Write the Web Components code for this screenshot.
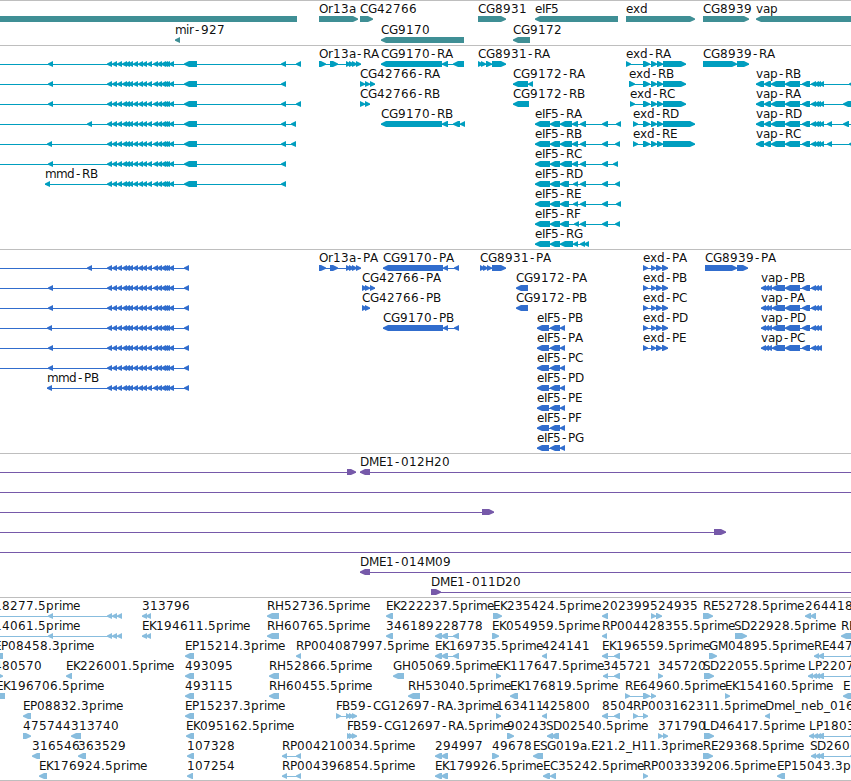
<!DOCTYPE html>
<html lang="en">
<head>
<meta charset="utf-8">
<title>Genome browser</title>
<style>
  body {
    margin: 0;
    background: #fff;
    overflow: hidden;
  }
</style>
</head>
<body>
<genome-view></genome-view>

<script>
const VIEW_WIDTH = 851;

// whole-pixel character advances of the track labels, digits are 8
const ADVANCE = {
  A: 8, B: 8, C: 8, D: 9, E: 7, F: 6, G: 9, H: 9, I: 3, K: 7, L: 7, M: 10, O: 9, P: 7, R: 8, S: 7,
  a: 7, b: 8, d: 8, e: 7, i: 3, l: 3, m: 11, n: 8, p: 8, r: 5, v: 7, x: 7,
  "-": 7, ".": 4, "_": 6
};

// exon groups shared by several transcripts
const MMD = "107-112 112-117 117-122 122-127 125-130 128-133 133-138 138-143 142-147 147-152 153-158 157-162 161-166 163-168 165-170 169-174";
const EXD = "643-650 651-657 657-663";
const EXD_P = "643-648 651-656 656-662 662-668";
const EIF = "535-550 550-560";
const EIF_P = "537-549 550-560 560-565";
const VAP = "756-764 764-771 771-785 785-800 802-810 811-816 814-819 816-821 819-824";
const VAP_P = "761-766 764-769 767-772 772-785 785-800 802-810 811-816 814-819 817-822";
const OFF = "-20--10";
const END = "860-870";

// one feature: "label|direction|start-end start-end ...|label x (optional)"
const TRACKS = [
  {
    color: "#3f8f95", pitch: 21, bottom: 0,
    rows: [
      ["|<|-20-297", "Or13a|>|319-358", "CG42766|>|360-373", "CG8931|>|478-506", "eIF5|<|535-618",
        "exd|>|626-695", "CG8939|>|703-749", "vap|<|756-870"],
      ["mir-927|<|175-180", "CG9170|<|381-464", "CG9172|<|513-530"]
    ]
  },
  {
    color: "#009ebf", pitch: 20, bottom: 1,
    rows: [
      [`|<|${OFF} 48-53 ${MMD} 184-197 281-286 296-301`, "Or13a-RA|>|319-326 330-338 346-351 349-354 352-357 356-361",
        "CG9170-RA|<|381-442 442-448 453-464", "CG8931-RA|>|478-483 481-486 486-492 492-506",
        `exd-RA|>|626-631 ${EXD} 663-686`, "CG8939-RA|>|703-737 737-749"],
      [`|<|${OFF} 48-53 ${MMD} 184-197 281-286`, "CG42766-RA|>|360-365 365-370 370-375",
        "CG9172-RA|<|513-528 528-533", `exd-RB|>|629-635 ${EXD} 663-686`, `vap-RB|<|${VAP} 849-870`],
      [`|<|${OFF} 48-53 ${MMD} 184-197 281-286 296-301`, "CG42766-RB|>|360-365 365-370",
        "CG9172-RB|<|513-529", `exd-RC|>|630-635 ${EXD} 663-686`, `vap-RA|<|${VAP} 843-870`],
      [`|<|${OFF} 87-92 ${MMD} 184-197 281-286 291-296`, "CG9170-RB|<|381-442 442-448 453-460 460-465",
        `eIF5-RA|<|${EIF} 560-572 572-578 580-586 602-608 616-621`, `exd-RD|>|633-638 ${EXD} 663-695`,
        `vap-RD|<|${VAP} 827-832 843-849 ${END}`],
      [`|<|${OFF} 47-52 ${MMD} 184-197 281-286 291-296`,
        `eIF5-RB|<|${EIF} 560-572 572-578 580-586 602-608 615-620`, `exd-RE|>|633-638 ${EXD} 663-695`,
        `vap-RC|<|${VAP} 827-832 849-870`],
      [`|<|${OFF} 48-53 ${MMD} 184-197 281-286`, `eIF5-RC|<|${EIF} 560-572 572-578 580-586 602-608 613-618`],
      [`mmd-RB|<|45-50 ${MMD} 184-197 281-286`, `eIF5-RD|<|${EIF} 560-569 573-578 580-586 602-608 615-620`],
      [`eIF5-RE|<|${EIF} 560-569 573-578 580-586 602-608 616-621`],
      [`eIF5-RF|<|${EIF} 560-569 574-579 580-586 602-608 615-620`],
      [`eIF5-RG|<|${EIF} 560-573 573-578 580-585 584-589`]
    ]
  },
  {
    color: "#316dcd", pitch: 20, bottom: 1,
    rows: [
      [`|<|${OFF} 87-92 ${MMD} 184-189`, "Or13a-PA|>|319-326 330-338 346-351 349-354 352-357 356-361",
        "CG9170-PA|<|383-443 443-448 454-459", "CG8931-PA|>|480-485 483-488 487-492 492-506",
        `exd-PA|>|${EXD_P}`, "CG8939-PA|>|705-737 737-748"],
      [`|<|${OFF} 48-53 ${MMD} 184-189`, "CG42766-PA|>|362-367 365-370 370-375", "CG9172-PA|<|516-528",
        `exd-PB|>|${EXD_P}`, `vap-PB|<|${VAP_P}`],
      [`|<|${OFF} 48-53 ${MMD} 184-189`, "CG42766-PB|>|362-367 365-370", "CG9172-PB|<|516-528",
        `exd-PC|>|${EXD_P}`, `vap-PA|<|${VAP_P}`],
      [`|<|${OFF} 47-52 ${MMD} 184-189`, "CG9170-PB|<|383-443 443-448 454-459", `eIF5-PB|<|${EIF_P}`,
        `exd-PD|>|${EXD_P}`, `vap-PD|<|${VAP_P}`],
      [`|<|${OFF} 48-53 ${MMD} 184-189`, `eIF5-PA|<|${EIF_P}`, `exd-PE|>|${EXD_P}`, `vap-PC|<|${VAP_P}`],
      [`|<|${OFF} 48-53 ${MMD} 184-189`, `eIF5-PC|<|${EIF_P}`],
      [`mmd-PB|<|47-52 ${MMD} 184-189`, `eIF5-PD|<|${EIF_P}`],
      [`eIF5-PE|<|${EIF_P}`],
      [`eIF5-PF|<|${EIF_P}`],
      [`eIF5-PG|<|${EIF_P}`]
    ]
  },
  {
    color: "#7659a9", pitch: 20, bottom: 1,
    rows: [
      [`|>|${OFF} 347-356`, `DME1-012H20|<|360-370 ${END}`],
      [`|>|${OFF} ${END}`],
      [`|>|${OFF} 482-494`],
      [`|>|${OFF} 714-726`],
      [`|>|${OFF} ${END}`],
      [`DME1-014M09|<|360-370 ${END}`],
      [`DME1-011D20|>|431-441 ${END}`]
    ]
  },
  {
    color: "#88bdde", pitch: 20, bottom: 0, last: true,
    rows: [
      [`18277.5prime|<|${OFF} 48-53 107-112 112-117 117-122|-6`, "313796|<|142-147 146-151", "RH52736.5prime|<|267-279",
        "EK222237.5prime|<|386-393", "EK235424.5prime|>|493-502", "202399|<|602-608", "524935|>|651-656 656-662|650",
        "RE52728.5prime|>|703-713", "264418|<|805-811 810-816"],
      [`14061.5prime|<|${OFF} 48-53 107-112 112-117 117-122|-6`, "EK194611.5prime|<|142-147 146-151",
        "RH60765.5prime|<|267-279", "346189|<|386-393", "228778|<|435-442 441-448 453-459",
        "EK054959.5prime|>|492-499", "RP004428355.5prime|<|602-607", "SD22928.5prime|>|735-747|734", "RE|<|841-860"],
      ["EP08458.3prime|<|-10-3|-6", "EP15214.3prime|<|185-194", "RP004087997.5prime|<|296-301",
        "EK169735.5prime|<|435-442 441-448 453-459", "424141|<|542-547", "EK196559.5prime|<|602-608 614-620",
        "GM04895.5prime|>|709-717", "RE447|<|814-819 818-824 850-870"],
      ["480570|>|-10-3|-6", "EK226001.5prime|<|66-72", "493095|<|185-194", "RH52866.5prime|<|269-279",
        "GH05069.5prime|<|393-404", "EK117647.5prime|>|496-501", "345721|<|603-608 614-620", "345720|>|658-663",
        "SD22055.5prime|>|704-714|703", "LP2207|<|808-813 812-817 815-820 818-824 850-870"],
      ["EK196706.5prime|<|-10-5|-4", "493115|<|185-194", "RH60455.5prime|<|269-279", "RH53040.5prime|<|408-420",
        "EK176819.5prime|<|510-518", "RE64960.5prime|>|625-630 643-650 651-656", "EK154160.5prime|>|725-730",
        "E|<|843-860"],
      ["EP08832.3prime|<|23-31", "EP15237.3prime|<|185-194", "FB59-CG12697-RA.3prime|>|336-341 346-351 349-354 352-357",
        "163411|>|496-501", "425800|<|542-547", "8504|<|602-608 614-620", "RP003162311.5prime|>|633-638 643-648",
        "Dmel_neb_016|<|765-770"],
      ["475744|>|23-31", "313740|<|71-81", "EK095162.5prime|<|186-194",
        "FB59-CG12697-RA.5prime|>|347-352 349-354 352-357", "90243|>|507-514", "SD02540.5prime|<|547-553 551-559|546",
        "371790|>|658-663 663-668", "LD46417.5prime|>|704-714|703", "LP1803|<|809-814 813-818 816-821 818-824 850-870"],
      ["316546|<|32-40", "363529|<|78-86", "107328|<|187-194", "RP004210034.5prime|<|282-287 296-301",
        "294997|<|435-442 441-448", "49678|>|492-499", "ESG019a.E21.2_H11.3prime|<|533-543",
        "RE29368.5prime|>|703-713", "SD260|<|811-816 815-820 818-824 850-870|810"],
      ["EK176924.5prime|<|39-47", "107254|<|187-193", "RP004396854.5prime|<|282-287 296-301",
        "EK179926.5prime|<|435-442 441-448", "EC35242.5prime|<|543-550 550-556", "RP003339206.5prime|>|643-648",
        "EP15043.3prime|<|777-785"]
    ]
  }
];

class FeatureRow extends HTMLElement {
  constructor() {
    super();
    this.attachShadow({ mode: "open" });
  }

  set features(list) {
    this.shadowRoot.innerHTML = `
      <style>
        :host {
          display: block;
          height: var(--pitch, 20px);
        }
        svg {
          display: block;
          width: 100%;
          height: 100%;
          overflow: hidden;
        }
        path, rect {
          fill: var(--feature-color);
        }
        text {
          fill: #000;
          fill-opacity: 0.95;
          font: 12px "DejaVu Sans", sans-serif;
        }
      </style>
      <svg>${list.map(f => this.feature(f)).join("")}</svg>
    `;
  }

  feature(source) {
    const [label, direction, parts, labelX] = source.split("|");
    const segments = parts.split(" ").map(p => p.match(/^(-?\d+)-(-?\d+)$/).slice(1).map(Number));
    const first = segments[0][0];
    const last = segments[segments.length - 1][1];

    const line = segments.length > 1
      ? `<rect x="${first}" y="16" width="${last - first}" height="1"/>`
      : "";
    const d = segments.map(([start, end]) => direction === "<"
      ? `<path d="${this.arrow(start, end, 1)}"/>`
      : `<path d="${this.arrow(end, start, -1)}"/>`).join("");

    const text = label ? this.label(label, labelX ? Number(labelX) : first) : "";
    return line + d + text;
  }

  // head is 5px long, its tip slightly blunt
  arrow(tip, base, sign) {
    const neck = tip + 5 * sign;
    return `M${tip} 15.4L${neck} 13H${base}V19H${neck}L${tip} 16.8Z`;
  }

  label(text, x) {
    const xs = [];
    for (const ch of text) {
      xs.push(ch === "-" ? x + 1 : x);
      x += ADVANCE[ch] || 8;
    }
    return `<text x="${xs.join(" ")}" y="10">${text}</text>`;
  }
}

customElements.define("feature-row", FeatureRow);

class GenomeTrack extends HTMLElement {
  constructor() {
    super();
    const shadow = this.attachShadow({ mode: "open" });
    shadow.innerHTML = `
      <style>
        :host {
          display: block;
          box-sizing: border-box;
          border-top: 1px solid #bebebe;
          padding: 2px 0 var(--bottom, 1px);
        }
        :host([last]) {
          border-bottom: 1px solid #bebebe;
        }
      </style>
    `;
  }

  set track(track) {
    this.style.setProperty("--feature-color", track.color);
    this.style.setProperty("--pitch", track.pitch + "px");
    this.style.setProperty("--bottom", track.bottom + "px");
    this.toggleAttribute("last", !!track.last);
    for (const features of track.rows) {
      const row = document.createElement("feature-row");
      row.features = features;
      this.shadowRoot.append(row);
    }
  }
}

customElements.define("genome-track", GenomeTrack);

class GenomeView extends HTMLElement {
  constructor() {
    super();
    const shadow = this.attachShadow({ mode: "open" });
    shadow.innerHTML = `
      <style>
        :host {
          display: flex;
          flex-direction: column;
          width: ${VIEW_WIDTH}px;
          overflow: hidden;
        }
      </style>
    `;
    for (const data of TRACKS) {
      const track = document.createElement("genome-track");
      track.track = data;
      shadow.append(track);
    }
  }
}

customElements.define("genome-view", GenomeView);
</script>
</body>
</html>
